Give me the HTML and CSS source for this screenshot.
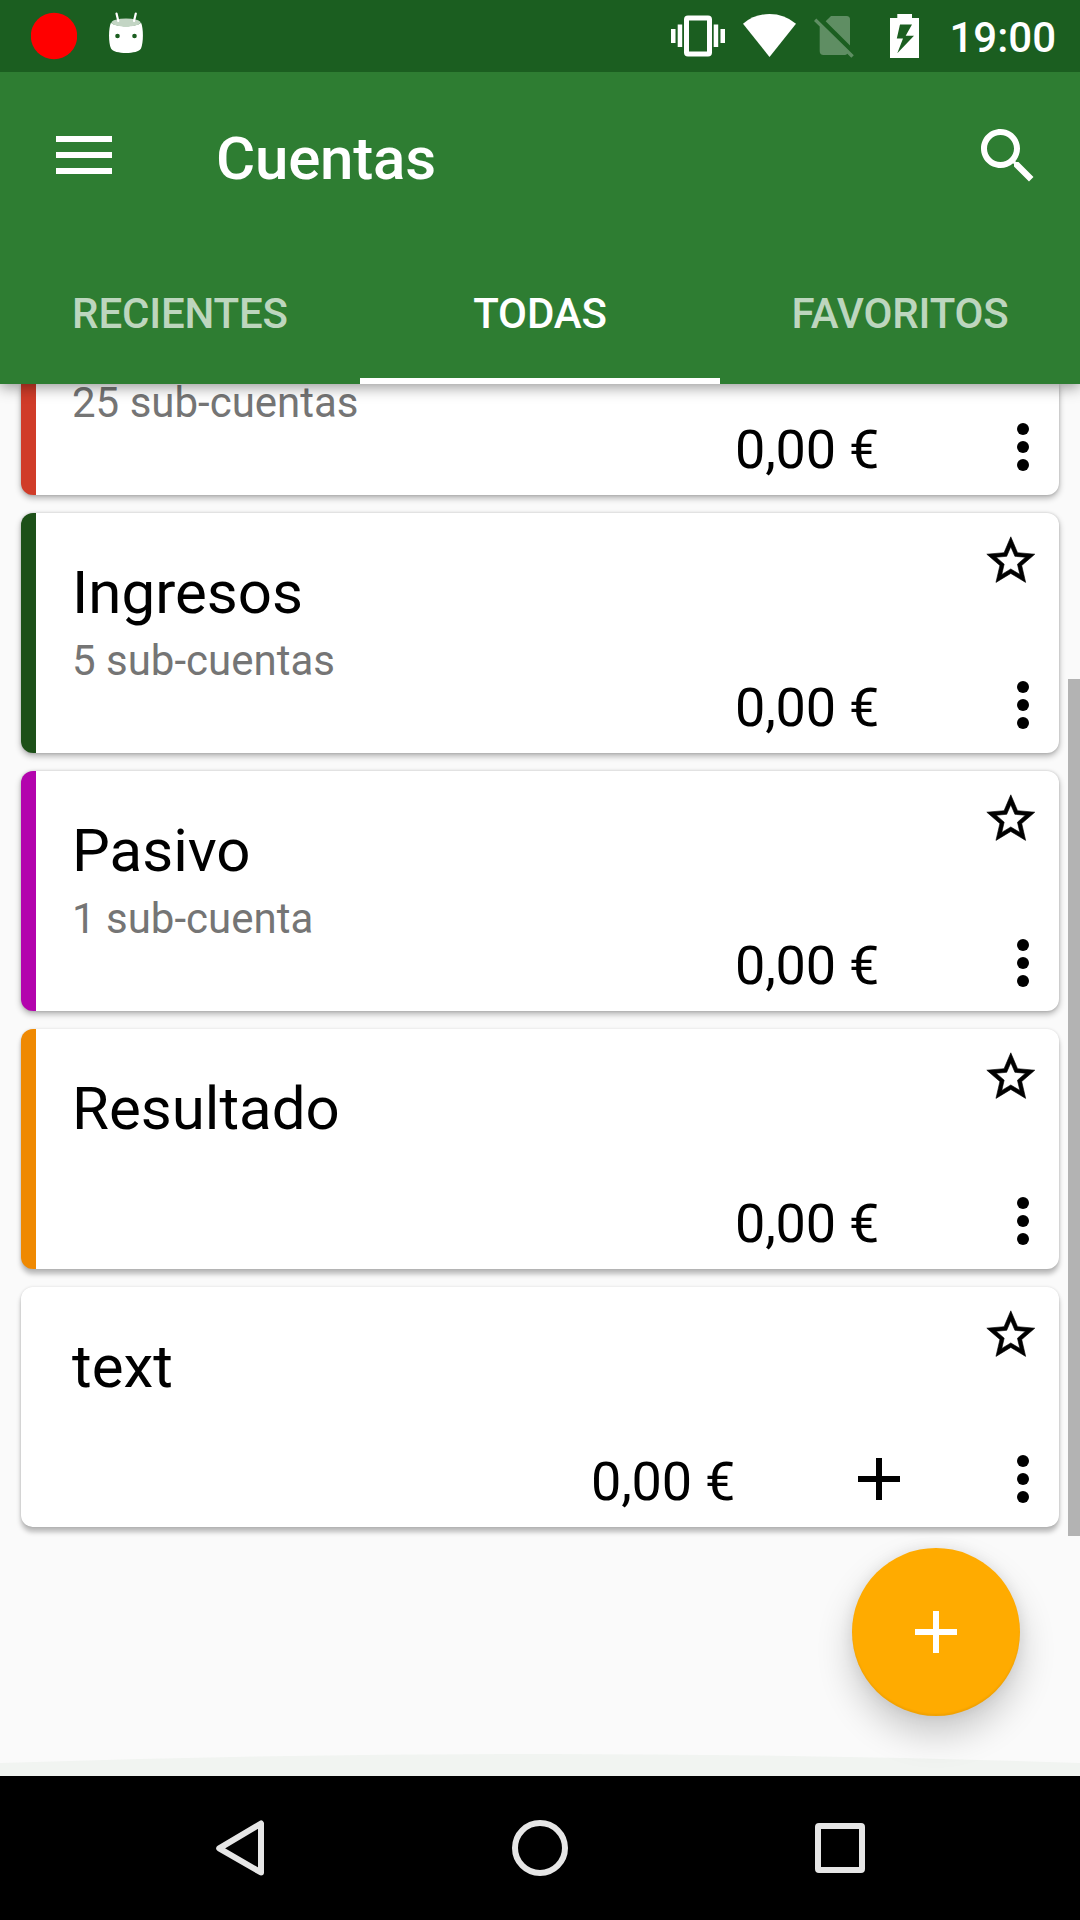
FILE: index.html
```html
<!DOCTYPE html>
<html lang="es">
<head>
<meta charset="utf-8">
<title>Cuentas</title>
<link rel="stylesheet" href="styles.css">
</head>
<body>
<svg class="symbols" aria-hidden="true">
  <symbol id="star" viewBox="0 0 24 24"><path d="M22 9.24l-7.19-.62L12 2 9.19 8.63 2 9.24l5.46 4.73L5.82 21 12 17.27 18.18 21l-1.63-7.03L22 9.24zM12 15.4l-3.76 2.27 1-4.28-3.32-2.88 4.38-.38L12 6.1l1.71 4.04 4.38.38-3.32 2.88 1 4.28L12 15.4z"/></symbol>
  <symbol id="more" viewBox="0 0 24 24"><circle cx="12" cy="6" r="2"/><circle cx="12" cy="12" r="2"/><circle cx="12" cy="18" r="2"/></symbol>
  <symbol id="plus" viewBox="0 0 24 24"><path d="M19 13h-6v6h-2v-6H5v-2h6V5h2v6h6v2z"/></symbol>
</svg>
<div class="screen">
  <header class="header">
    <div class="status">
      <svg class="rec" viewBox="31 0 46 72"><circle cx="54" cy="36" r="23.2" fill="#f00"/></svg>
      <svg class="droid" viewBox="108 0 36 72">
        <path fill="#fff" fill-rule="evenodd" d="M111 22.500c4 5 26 5 30 0 2.600 6 2.600 20 0 26-3 6-27 6-30 0-2.600-6-2.600-20 0-26zM115.200 36a2.300 2.300 0 1 0 4.600 0 2.300 2.300 0 1 0-4.600 0zM132.200 36a2.300 2.300 0 1 0 4.600 0 2.300 2.300 0 1 0-4.600 0z"/>
        <ellipse cx="126" cy="22.500" rx="14.500" ry="4" fill="#c3d5c4"/>
        <path d="M116.500 13.500l1.800 7.500M135.800 13.500l-1.800 7.500" stroke="#fff" stroke-width="2.200" stroke-linecap="round"/>
      </svg>
      <svg class="vibrate" viewBox="671 0 54 72" fill="#fff">
        <path d="M671 29h4.500v14H671zM677.700 24.500h4.500V47h-4.500zM713.700 24.500h4.500V47h-4.500zM720.500 29h4.500v14h-4.500z"/>
        <path fill-rule="evenodd" d="M688 15.500h20q4 0 4 4v33q0 4-4 4h-20q-4 0-4-4v-33q0-4 4-4zM689 20.500v31h18v-31z"/>
      </svg>
      <svg class="wifi" viewBox="743 0 53 72"><path fill="#fff" d="M743 23.700Q754.500 14 769.500 14T796 23.700L769.500 57z"/></svg>
      <svg class="sim" viewBox="814 0 40 72" fill="#fff" fill-opacity=".3">
        <path d="M831 16h15.500q3.500 0 3.500 3.500v26L825.700 21.300z"/>
        <path d="M816.300 18.500l37.500 36.800-2.500 2.500-4-4q-1 1.200-2.800 1.200H823.500q-3.800 0-3.800-3.700V26.500L814 21z"/>
      </svg>
      <svg class="battery" viewBox="890 0 29 72"><path fill="#fff" fill-rule="evenodd" d="M897.300 14h14.700v4h7v40h-29V18h7.300zM900 24.500l-3.200 14h6.200l-5.700 14.800L914 35.700h-8.300L912 24.500z"/></svg>
      <time class="clock">19:00</time>
    </div>
    <div class="appbar">
      <svg class="menu" viewBox="0 0 56 38" fill="#fff"><path d="M0 0h56v6H0zM0 16h56v6H0zM0 32h56v6H0z"/></svg>
      <h1 class="title">Cuentas</h1>
      <svg class="search" viewBox="0 0 24 24"><path fill="#fff" d="M15.500 14h-.79l-.28-.27C15.410 12.590 16 11.110 16 9.500 16 5.910 13.090 3 9.500 3S3 5.910 3 9.500 5.910 16 9.500 16c1.610 0 3.090-.59 4.230-1.570l.27.28v.79l5 4.990L20.490 19l-4.990-5zm-6 0C7.010 14 5 11.990 5 9.500S7.010 5 9.500 5 14 7.010 14 9.500 11.990 14 9.500 14z"/></svg>
    </div>
    <nav class="tabs">
      <span class="tab">RECIENTES</span>
      <span class="tab tab-active">TODAS</span>
      <span class="tab">FAVORITOS</span>
    </nav>
  </header>

  <main class="content">
    <ul class="accounts">
      <li class="card card-cut expenses">
        <div class="info"><p class="sub">25 sub-cuentas</p></div>
        <div class="side">
          <div class="actions"><span class="amount">0,00 €</span><svg class="icon"><use href="#more"/></svg></div>
        </div>
      </li>
      <li class="card income">
        <div class="info"><h2 class="name">Ingresos</h2><p class="sub">5 sub-cuentas</p></div>
        <div class="side">
          <svg class="star"><use href="#star"/></svg>
          <div class="actions"><span class="amount">0,00 €</span><svg class="icon"><use href="#more"/></svg></div>
        </div>
      </li>
      <li class="card liability">
        <div class="info"><h2 class="name">Pasivo</h2><p class="sub">1 sub-cuenta</p></div>
        <div class="side">
          <svg class="star"><use href="#star"/></svg>
          <div class="actions"><span class="amount">0,00 €</span><svg class="icon"><use href="#more"/></svg></div>
        </div>
      </li>
      <li class="card equity">
        <div class="info"><h2 class="name">Resultado</h2></div>
        <div class="side">
          <svg class="star"><use href="#star"/></svg>
          <div class="actions"><span class="amount">0,00 €</span><svg class="icon"><use href="#more"/></svg></div>
        </div>
      </li>
      <li class="card plain">
        <div class="info"><h2 class="name">text</h2></div>
        <div class="side">
          <svg class="star"><use href="#star"/></svg>
          <div class="actions"><span class="amount">0,00 €</span><svg class="icon add"><use href="#plus"/></svg><svg class="icon"><use href="#more"/></svg></div>
        </div>
      </li>
    </ul>
    <div class="scrollbar"></div>
    <button class="fab" aria-label="Añadir"><svg class="icon"><use href="#plus"/></svg></button>
    <svg class="overscroll" viewBox="0 0 1080 22"><path d="M0 9Q540-9 1080 9V22H0z"/></svg>
  </main>

  <footer class="navbar">
    <svg viewBox="0 0 72 72"><path d="M57 11.500v49L15.200 36.300z"/></svg>
    <svg viewBox="0 0 72 72"><circle cx="36" cy="36" r="25"/></svg>
    <svg viewBox="0 0 72 72"><rect x="14" y="14" width="44" height="44" rx="1"/></svg>
  </footer>
</div>
</body>
</html>
```
FILE: styles.css
```css
* { box-sizing: border-box; margin: 0; padding: 0; }
body { font-family: Roboto, "Liberation Sans", sans-serif; background: #fafafa; }
svg { display: block; flex: none; }
.symbols { position: absolute; width: 0; height: 0; }

.screen { width: 1080px; height: 1920px; display: flex; flex-direction: column; overflow: hidden; }

/* Header */
.header {
  position: relative;
  z-index: 2;
  flex: none;
  height: 384px;
  background: #2e7d32;
  color: #fff;
  box-shadow: 0 3px 14px rgba(0, 0, 0, .42);
}
.status { height: 72px; background: #1b5e20; display: flex; align-items: center; padding: 0 24px 0 31px; }
.status svg { height: 72px; }
.rec { width: 46px; }
.droid { width: 36px; margin-left: 31px; }
.vibrate { width: 54px; margin-left: auto; }
.wifi { width: 53px; margin-left: 18px; }
.sim { width: 40px; margin-left: 18px; }
.battery { width: 29px; margin-left: 36px; }
.clock { width: 137px; text-align: right; font-size: 42px; font-weight: 500; line-height: 49px; padding-top: 2px; }

.appbar { height: 168px; display: flex; align-items: center; padding: 0 36px 0 56px; }
.menu { width: 56px; height: 38px; margin-bottom: 2px; }
.title { flex: 1; margin-left: 104px; padding-top: 5px; font-size: 60px; font-weight: 500; line-height: 70px; letter-spacing: -.2px; }
.search { width: 72px; height: 72px; }

.tabs { height: 144px; display: grid; grid-template-columns: repeat(3, 1fr); }
.tab {
  display: flex; align-items: center; justify-content: center;
  padding-top: 8px; border-bottom: 6px solid transparent;
  font-size: 42px; font-weight: 500; line-height: 49px; letter-spacing: -.15px;
  color: rgba(255, 255, 255, .7);
}
.tab-active { color: #fff; border-bottom-color: #fff; }

/* Account list */
.content { position: relative; flex: 1; overflow: hidden; background: #fafafa; }
.accounts { list-style: none; display: flex; flex-direction: column; gap: 18px; padding: 0 21px; }
.card {
  height: 240px;
  display: flex;
  justify-content: space-between;
  border-radius: 12px;
  border-left: 15px solid #fff;
  background: #fff;
  box-shadow: 0 3px 6px rgba(0, 0, 0, .3), 0 0 3px rgba(0, 0, 0, .16);
}
.card:nth-child(n+4) { box-shadow: 0 5px 5px rgba(0, 0, 0, .26), 0 0 3px rgba(0, 0, 0, .13); }
.card-cut { height: 111px; border-top-left-radius: 0; border-top-right-radius: 0; }
.expenses { border-left-color: #d03c29; }
.income { border-left-color: #1d5018; }
.liability { border-left-color: #b304ad; }
.equity { border-left-color: #ef8902; }
.info { padding: 45px 0 0 36px; }
.card-cut .info { padding-top: 0; }
.name { font-size: 60px; font-weight: 400; line-height: 70px; color: #000; }
.sub { font-size: 42px; line-height: 49px; color: #757575; margin-top: 8px; }
.card-cut .sub { margin-top: 0; line-height: 37px; }
.side { display: flex; flex-direction: column; align-items: flex-end; justify-content: space-between; padding-bottom: 12px; }
.card-cut .side { justify-content: flex-end; }
.star { width: 57.600px; height: 57.600px; margin: 19.200px 19.200px 0 0; stroke: #000; stroke-width: .25; }
.actions { display: flex; align-items: center; }
.amount { font-size: 54px; line-height: 63px; padding-top: 5px; margin-right: 108px; color: #000; letter-spacing: -.25px; }
.icon { width: 72px; height: 72px; }
.add { margin-right: 72px; }

.scrollbar { position: absolute; right: 0; top: 295px; width: 12px; height: 857px; background: #b3b3b3; }
.fab {
  position: absolute; left: 852px; top: 1164px; width: 168px; height: 168px;
  display: flex; align-items: center; justify-content: center;
  border: 0; border-radius: 50%; background: #ffab00;
  box-shadow: 0 18px 36px rgba(0, 0, 0, .2), 0 0 14px rgba(0, 0, 0, .08), inset 0 -2px 2px rgba(0, 0, 0, .06);
}
.fab .icon { fill: #fff; }
.overscroll { position: absolute; left: 0; bottom: 0; width: 1080px; height: 22px; fill: rgba(46, 125, 50, .045); }

/* System navigation */
.navbar { flex: none; height: 144px; background: #000; display: flex; align-items: center; justify-content: center; gap: 228px; }
.navbar svg { width: 72px; height: 72px; fill: none; stroke: #e6e6e6; stroke-width: 6; stroke-linejoin: round; }
```
